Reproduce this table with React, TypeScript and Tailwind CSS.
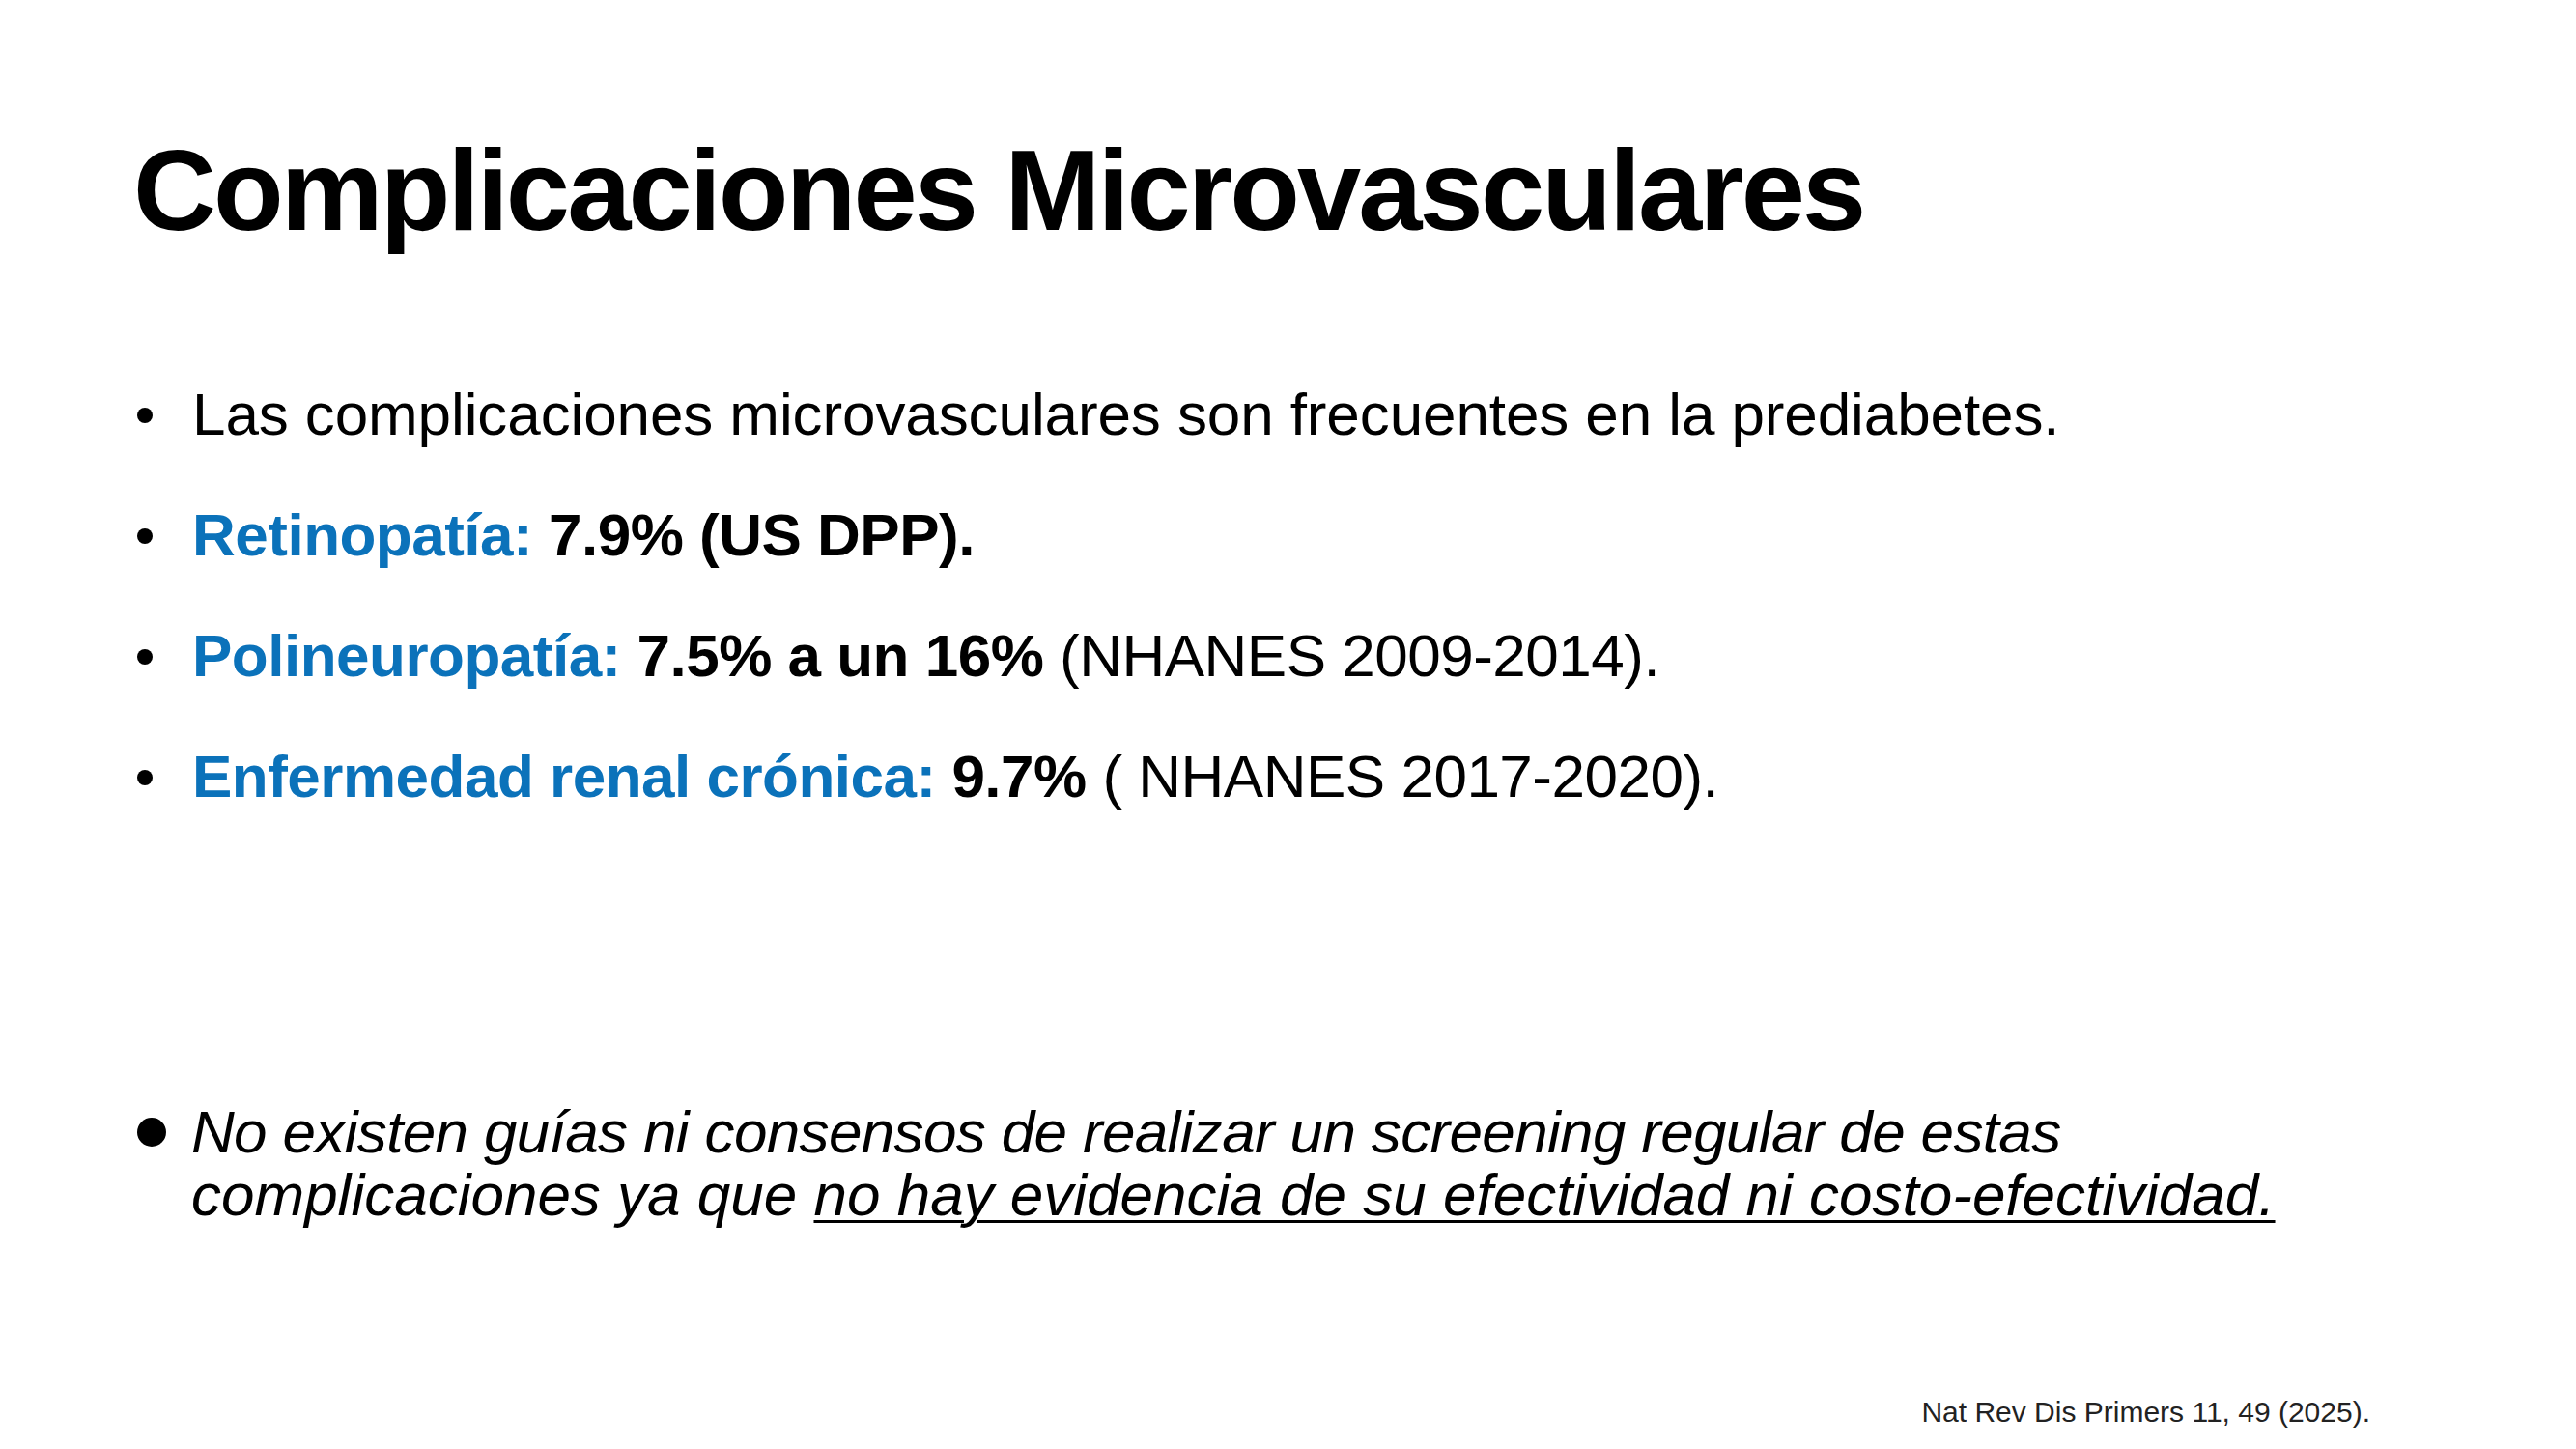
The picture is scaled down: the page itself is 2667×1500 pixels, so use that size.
import React from "react";

const Dot = () => (
  <span className="mt-[56px] ml-[2px] block h-[16px] w-[16px] shrink-0 rounded-full bg-black" />
);

function Bullet({ children, tight }: { children: React.ReactNode; tight?: boolean }) {
  return (
    <li className="flex h-[125px] items-start">
      <span className="flex w-[59px] shrink-0">
        <Dot />
      </span>
      <span
        className={
          tight
            ? "whitespace-nowrap text-[62px] leading-[125px] tracking-[-0.5px] text-black"
            : "whitespace-nowrap text-[62px] leading-[125px] tracking-[-0.1px] text-black"
        }
      >
        {children}
      </span>
    </li>
  );
}

export default function App() {
  return (
    <div className="relative h-[1500px] w-[2667px] overflow-hidden bg-white font-['Liberation_Sans',Arial,sans-serif] text-black">
      <div className="flex flex-col pt-[137px] pl-[135px]">
        <h1 className="ml-[3px] whitespace-nowrap text-[119px] leading-[119px] font-bold tracking-[-2.9px] text-black">
          Complicaciones Microvasculares
        </h1>

        <ul className="mt-[110px] flex flex-col pl-[5px]">
          <Bullet>Las complicaciones microvasculares son frecuentes en la prediabetes.</Bullet>
          <Bullet tight>
            <span className="font-bold text-[#0b72ba]">Retinopatía:</span>{" "}
            <span className="font-bold">7.9% (US DPP).</span>
          </Bullet>
          <Bullet tight>
            <span className="font-bold text-[#0b72ba]">Polineuropatía:</span>{" "}
            <span className="font-bold">7.5% a un 16%</span> (NHANES 2009-2014).
          </Bullet>
          <Bullet tight>
            <span className="font-bold text-[#0b72ba]">Enfermedad renal crónica:</span>{" "}
            <span className="font-bold">9.7%</span> ( NHANES 2017-2020).
          </Bullet>
        </ul>

        <div className="mt-[273px] flex items-start pl-[7px]">
          <span className="mt-[18px] block h-[30px] w-[30px] shrink-0 rounded-full bg-black" />
          <p className="ml-[26px] text-[62px] leading-[65px] italic whitespace-nowrap text-black">
            <span className="tracking-[-0.65px]">
              No existen guías ni consensos de realizar un screening regular de estas
            </span>
            <br />
            complicaciones ya que{" "}
            <span className="underline decoration-[3px] underline-offset-[5px]">
              no hay evidencia de su efectividad ni costo-efectividad.
            </span>
          </p>
        </div>
      </div>

      <div className="mt-[178px] pr-[213px] text-right text-[30px] leading-[30px] text-[#222222]">
        Nat Rev Dis Primers 11, 49 (2025).
      </div>
    </div>
  );
}
